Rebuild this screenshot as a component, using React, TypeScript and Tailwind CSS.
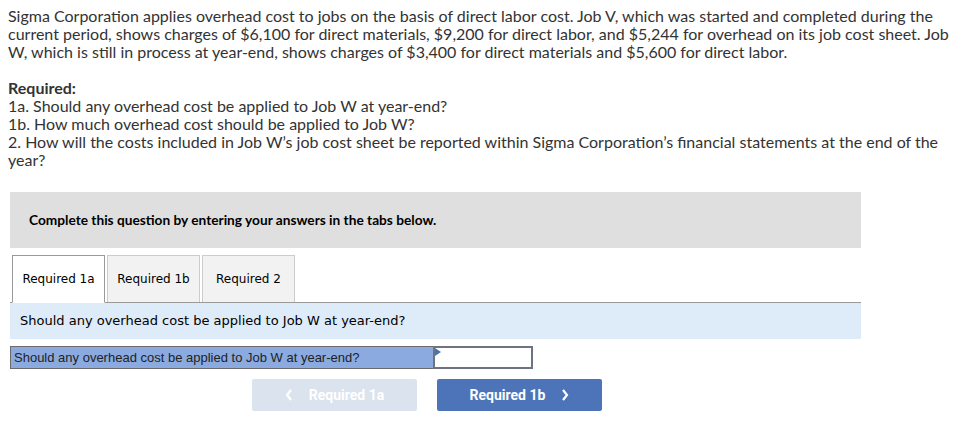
import React from "react";

export default function App() {
  const body = { fontFamily: "Lato, 'Open Sans', sans-serif" };
  const verd = { fontFamily: "'DejaVu Sans', Verdana, sans-serif" };
  const btn = { fontFamily: "Roboto, 'Liberation Sans', Arial, sans-serif" };
  return (
    <div className="w-[967px] h-[447px] bg-white text-[#333]">
      <div className="px-2 pt-[7px] text-[16px] leading-[18px] whitespace-nowrap" style={body}>
        <p>
          Sigma Corporation applies overhead cost to jobs on the basis of direct labor cost. Job V, which was started and completed during the
          <br />
          current period, shows charges of $6,100 for direct materials, $9,200 for direct labor, and $5,244 for overhead on its job cost sheet. Job
          <br />
          W, which is still in process at year-end, shows charges of $3,400 for direct materials and $5,600 for direct labor.
        </p>
        <p className="mt-[18px] font-bold">Required:</p>
        <p>1a. Should any overhead cost be applied to Job W at year-end?</p>
        <p>1b. How much overhead cost should be applied to Job W?</p>
        <p>
          2. How will the costs included in Job W’s job cost sheet be reported within Sigma Corporation’s financial statements at the end of the
          <br />
          year?
        </p>
      </div>

      <div className="ml-[10px] w-[851px]">
        <div className="mt-[23px] h-[56px] bg-[#dfdfdf] flex items-center pl-[19px]">
          <span className="text-[13.7px] font-bold text-black" style={body}>
            Complete this question by entering your answers in the tabs below.
          </span>
        </div>

        <div className="mt-[7px] flex items-end gap-[2px] border-b border-[#999] pl-[2px] h-[48px]" style={verd}>
          <div className="w-[93px] h-[48px] -mb-px bg-white border border-[#999] border-b-white flex items-center justify-center text-[12px] text-black">
            Required 1a
          </div>
          <div className="w-[93px] h-[47px] bg-[#f2f2f2] border border-[#ccc] border-b-0 flex items-center justify-center text-[12px] text-black">
            Required 1b
          </div>
          <div className="w-[93px] h-[47px] bg-[#f2f2f2] border border-[#ccc] border-b-0 flex items-center justify-center text-[12px] text-black">
            Required 2
          </div>
        </div>

        <div className="h-[36px] bg-[#deebf8] flex items-center pl-[10px] text-[13px] text-black" style={verd}>
          Should any overhead cost be applied to Job W at year-end?
        </div>

        <div className="mt-[7px] flex h-[23px]">
          <div
            className="w-[423px] h-full bg-[#8aaae0] border border-[#6b6b6b] border-r-0 flex items-center pl-[3px] text-[13px] text-[#222]"
            style={{ fontFamily: "'Liberation Sans', Arial, sans-serif" }}
          >
            Should any overhead cost be applied to Job W at year-end?
          </div>
          <div className="relative w-[100px] h-full bg-white border-2 border-[#6d7380]">
            <div className="absolute left-0 top-0 w-0 h-0 border-t-[4px] border-b-[4px] border-l-[6px] border-t-transparent border-b-transparent border-l-[#4a73b7]" />
          </div>
        </div>

        <div className="mt-[10px] flex gap-[20px] pl-[242px]" style={btn}>
          <div className="w-[165px] h-[32px] rounded-[2px] bg-[#dbe3ef] flex items-center justify-center gap-[16px] text-white font-bold text-[14px]">
            <svg width="8" height="12" viewBox="0 0 8 12"><path d="M6 1 L2 6 L6 11" stroke="white" strokeWidth="2.2" fill="none" /></svg>
            <span>Required 1a</span>
          </div>
          <div className="w-[165px] h-[32px] rounded-[2px] bg-[#4d74b8] flex items-center justify-center gap-[16px] text-white font-bold text-[14px]">
            <span>Required 1b</span>
            <svg width="8" height="12" viewBox="0 0 8 12"><path d="M2 1 L6 6 L2 11" stroke="white" strokeWidth="2.2" fill="none" /></svg>
          </div>
        </div>
      </div>
    </div>
  );
}
